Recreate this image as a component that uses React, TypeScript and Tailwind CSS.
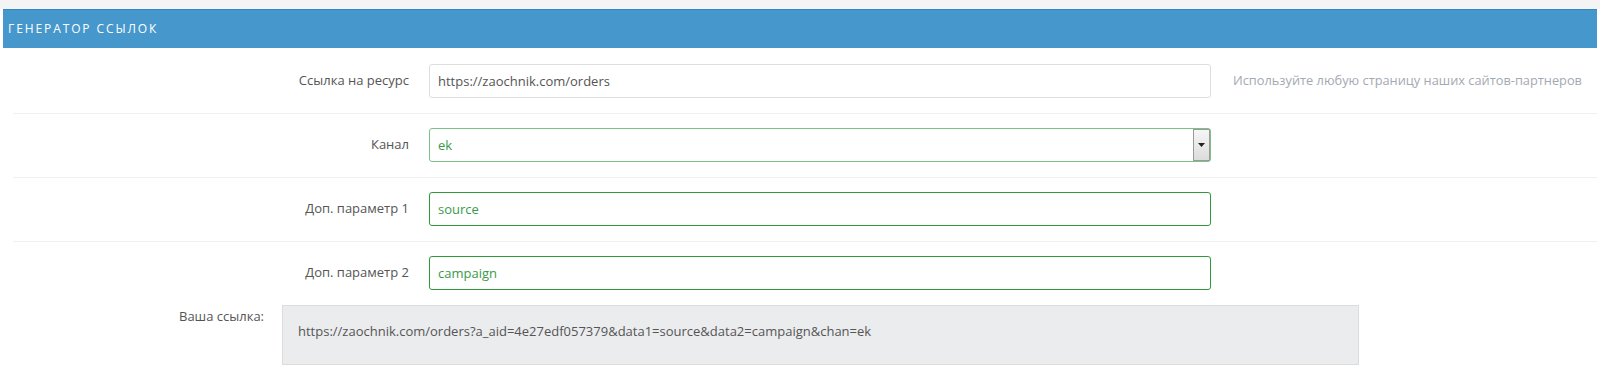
import { useState } from "react";

const fields = [
  { label: "Ссылка на ресурс", value: "https://zaochnik.com/orders", kind: "url" },
  { label: "Канал", value: "ek", kind: "select" },
  { label: "Доп. параметр 1", value: "source", kind: "param" },
  { label: "Доп. параметр 2", value: "campaign", kind: "param" },
];

export default function App() {
  const [values, setValues] = useState(fields.map((f) => f.value));

  const link = `${values[0]}?a_aid=4e27edf057379&data1=${values[2]}&data2=${values[3]}&chan=${values[1]}`;

  return (
    <div className="w-[1600px] h-[388px] bg-white font-['Open_Sans',sans-serif] text-[13px] text-[#555]">
      <div className="h-[9px] bg-[#f4f4f4]" />
      {/* Header */}
      <div className="ml-[3px] mr-[3px] h-[39px] bg-[#4597cc] border-t border-[#2f88c6] flex items-center px-[5px]">
        <span className="text-white text-[12px] tracking-[1.9px] uppercase">
          Генератор ссылок
        </span>
      </div>

      {/* Form rows */}
      <div className="ml-[13px] mr-[3px] mt-[2px]">
        {fields.map((f, i) => (
          <div
            key={f.label}
            className={`flex items-center pt-[14px] pb-[15px] ${
              i < fields.length - 1 ? "border-b border-[#f1f1f1]" : ""
            }`}
          >
            <label className="w-[396px] text-right">{f.label}</label>
            <div className="ml-[20px] w-[782px] relative">
              <input
                type="text"
                value={values[i]}
                onChange={(e) =>
                  setValues((prev) => prev.map((v, j) => (j === i ? e.target.value : v)))
                }
                className={`w-full h-[34px] px-[8px] rounded-[3px] border outline-none ${
                  f.kind === "url"
                    ? "border-[#dedede] text-[#555]"
                    : f.kind === "select"
                    ? "border-[#7cc08a] text-[#3a9a4a]"
                    : "border-[#2e9a3a] text-[#3a9a4a]"
                }`}
              />
              {f.kind === "select" && (
                <div className="absolute right-[1px] top-[1px] bottom-[1px] w-[17px] border border-[#9a9a9a] bg-gradient-to-b from-[#f6f6f6] to-[#dcdcdc] flex items-center justify-center">
                  <svg width="7" height="4" viewBox="0 0 7 4">
                    <path d="M0 0h7L3.5 4z" fill="#222" />
                  </svg>
                </div>
              )}
            </div>
            {f.kind === "url" && (
              <span className="ml-[22px] text-[12.8px] text-[#a3a9b1]">
                Используйте любую страницу наших сайтов-партнеров
              </span>
            )}
          </div>
        ))}
      </div>

      {/* Result */}
      <div className="flex">
        <div className="w-[282px] pl-[179px] pt-[2px]">Ваша ссылка:</div>
        <div className="w-[1077px] h-[60px] bg-[#ebecee] border border-[#dcdcdc] pl-[15px] pt-[16px]">
          {link}
        </div>
      </div>
    </div>
  );
}
